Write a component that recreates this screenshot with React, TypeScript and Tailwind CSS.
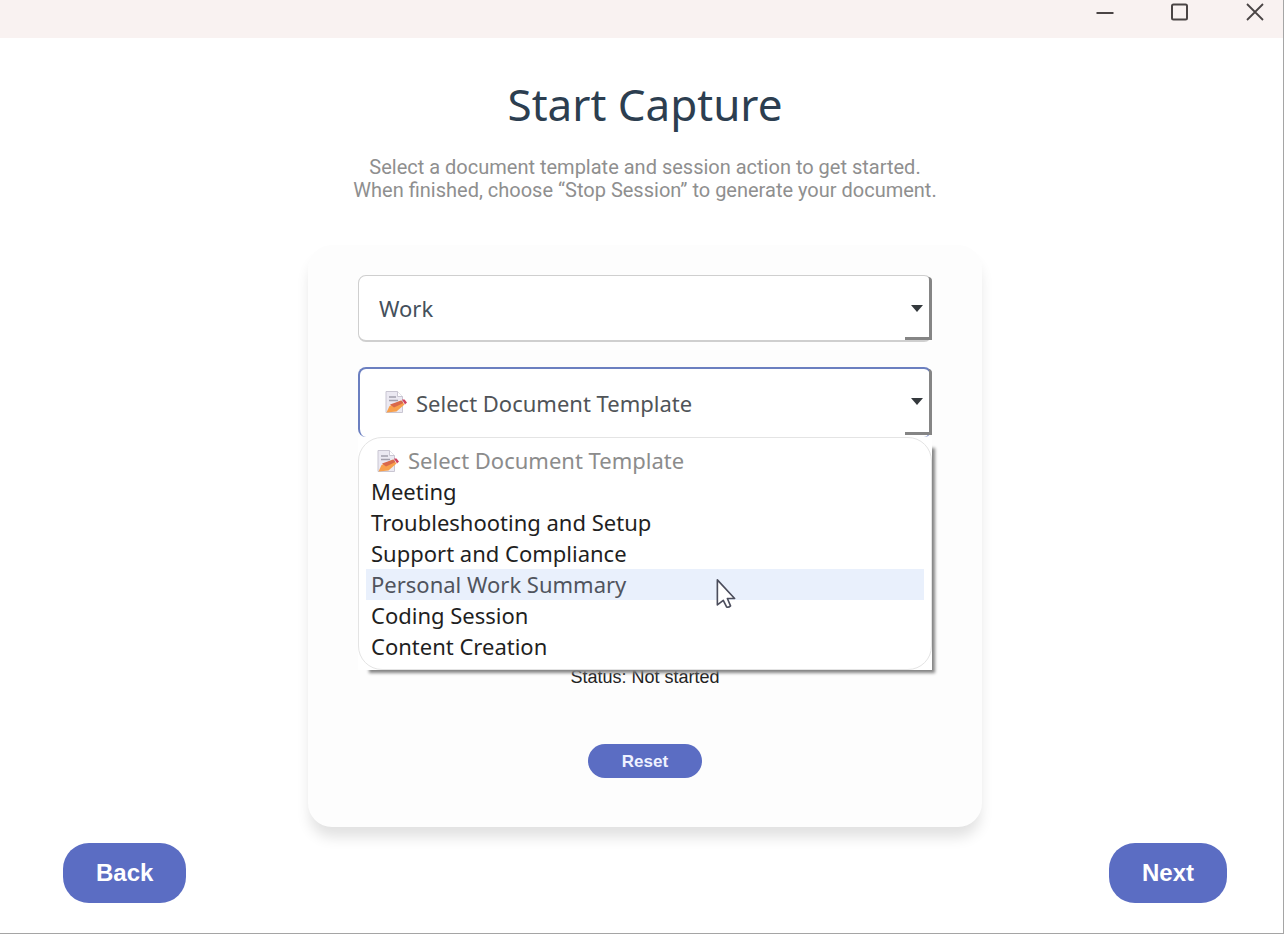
import { useState } from 'react';
import type { ReactNode } from 'react';

const templates = [
  'Meeting',
  'Troubleshooting and Setup',
  'Support and Compliance',
  'Personal Work Summary',
  'Coding Session',
  'Content Creation',
];

const TitleBar = () => (
  <header className="flex h-[38px] justify-end bg-[#f9f2f1] pr-[18px] text-[#4a4444]">
    <div className="flex h-6 items-center gap-[55px]">
      <button type="button" aria-label="Minimize">
        <svg width="20" height="20" viewBox="0 0 20 20" fill="none" stroke="currentColor" strokeWidth="2">
          <path d="M1.500 11H18.500" />
        </svg>
      </button>
      <button type="button" aria-label="Maximize">
        <svg width="20" height="20" viewBox="0 0 20 20" fill="none" stroke="currentColor" strokeWidth="2">
          <rect x="2" y="2.500" width="15" height="15" rx="1.500" />
        </svg>
      </button>
      <button type="button" aria-label="Close">
        <svg width="20" height="20" viewBox="0 0 20 20" fill="none" stroke="currentColor" strokeWidth="1.800">
          <path d="M2 2L18 18M18 2L2 18" />
        </svg>
      </button>
    </div>
  </header>
);

const MemoIcon = () => (
  <svg width="24" height="24" viewBox="0 0 24 24" fill="none" aria-hidden="true">
    <path d="M2 1.500H13.500L18.500 6.500V22.500H2Z" fill="#ebe9f2" stroke="#c9c6d2" />
    <path d="M13.500 1.500V6.500H18.500" fill="#fff" stroke="#c9c6d2" />
    <path d="M5 7H12M5 10.500H14" stroke="#a3a0ad" strokeWidth="1.300" />
    <path d="M2.500 22.500L5.500 16L17 10.500L20.500 14.500L12.500 21.500Z" fill="#f8a04c" />
    <path d="M6 14.500L17.500 10.500L19.500 13L10 17.500Z" fill="#d9694a" />
    <path d="M18 9.500L20.500 9.500L23 12.500L21 14.500Z" fill="#cf4060" />
  </svg>
);

const Cursor = () => (
  <svg
    className="pointer-events-none absolute left-[350px] top-[9px] z-10"
    width="20"
    height="32"
    viewBox="0 0 22 34"
    aria-hidden="true"
  >
    <path
      d="M1.500 1.500V29L8 24L11.500 31Q13.500 32.500 16 30L12.500 22H20.500Z"
      fill="#fff"
      stroke="#4b4d5c"
      strokeWidth="1.800"
      strokeLinejoin="round"
    />
  </svg>
);

const SelectFrame = ({ children }: { children: ReactNode }) => (
  <div className="relative">
    {children}
    <span className="pointer-events-none absolute bottom-0.5 right-0 top-0.5 w-[27px] rounded-tr-sm border-r-3 border-[#858585]" />
    <span className="pointer-events-none absolute bottom-0.5 right-0 h-[3px] w-[27px] bg-[#858585]" />
    <svg
      className="pointer-events-none absolute inset-y-0 right-2 my-auto"
      width="14"
      height="10"
      viewBox="0 0 14 10"
      aria-hidden="true"
    >
      <path d="M1 1H13L7 8Z" fill="#34393d" />
    </svg>
  </div>
);

const App = () => {
  const [category, setCategory] = useState('Work');
  const [template, setTemplate] = useState('');
  const [active, setActive] = useState('Personal Work Summary');

  return (
    <div className="flex min-h-screen flex-col border-b border-r border-[#a5a5a5] bg-white font-['Noto_Sans',sans-serif]">
      <TitleBar />

      <main className="flex flex-col items-center pl-[7px] pt-10">
        <h1 className="text-[44px] leading-[52px] text-[#2c3e50]">Start Capture</h1>
        <p className="mt-[26px] text-center font-[Roboto,sans-serif] text-xl leading-[23px] text-[#8f8f8f]">
          Select a document template and session action to get started.
          <br />
          When finished, choose “Stop Session” to generate your document.
        </p>

        {/* Session card */}
        <section className="mt-[43px] flex w-full max-w-[674px] flex-col items-center rounded-3xl bg-[#fdfdfd] px-[50px] pb-[49px] pt-[30px] shadow-[0_12px_14px_-2px_rgba(0,0,0,0.12)]">
          <div className="w-full">
            <SelectFrame>
              <select
                aria-label="Category"
                value={category}
                onChange={(e) => setCategory(e.target.value)}
                className="block h-[67px] w-full appearance-none rounded-lg border border-b-2 border-[#cfcfcf] bg-white px-5 text-[22px] text-[#44505c]"
              >
                <option>Work</option>
                <option>Personal</option>
              </select>
            </SelectFrame>
          </div>

          <div className="relative mt-[25px] w-full">
            <SelectFrame>
              <select
                aria-label="Document template"
                value={template}
                onChange={(e) => setTemplate(e.target.value)}
                className="block h-[70px] w-full appearance-none rounded-lg border-x-2 border-t-2 border-[#6b7fc0] bg-white pl-14 text-[22px] text-[#505458]"
              >
                <option value="">Select Document Template</option>
                {templates.map((name) => (
                  <option key={name}>{name}</option>
                ))}
              </select>
              <span className="pointer-events-none absolute inset-y-0 left-[26px] flex items-center">
                <MemoIcon />
              </span>
            </SelectFrame>

            {/* Open list */}
            <div className="absolute left-0 top-full w-full bg-white shadow-[7px_7px_3px_-4px_#858585]">
              <ul
                role="listbox"
                aria-label="Document templates"
                className="rounded-3xl border border-[#e4e4e4] px-[7px] py-[7px] text-[22px] leading-[31px] text-[#1f1f1f]"
              >
                <li
                  role="option"
                  aria-selected="false"
                  aria-disabled="true"
                  className="flex items-center gap-2 pl-2.5 text-[#8c8c8c]"
                >
                  <MemoIcon />
                  Select Document Template
                </li>
                {templates.map((name) => (
                  <li
                    key={name}
                    role="option"
                    aria-selected={name === active}
                    onMouseEnter={() => setActive(name)}
                    onClick={() => setTemplate(name)}
                    className={
                      name === active
                        ? 'relative bg-[#e9f0fc] px-[5px] text-[#50545e]'
                        : 'relative px-[5px]'
                    }
                  >
                    {name}
                    {name === active && <Cursor />}
                  </li>
                ))}
              </ul>
            </div>
          </div>

          <p className="mt-[227px] font-['Liberation_Sans',sans-serif] text-lg leading-[26px] text-[#222]">
            Status: Not started
          </p>
          <button
            type="button"
            className="mt-[54px] h-[34px] rounded-full bg-[#5b6dc3] px-[34px] pt-0.5 font-['Liberation_Sans',sans-serif] text-[17px] font-bold text-[#eef1ff]"
          >
            Reset
          </button>
        </section>
      </main>

      <footer className="flex justify-between pb-[30px] pl-[63px] pr-14 pt-4 font-['Liberation_Sans',sans-serif] text-2xl font-bold text-white">
        <button type="button" className="h-[60px] rounded-[26px] bg-[#5b6dc3] px-[33px]">
          Back
        </button>
        <button type="button" className="h-[60px] rounded-[26px] bg-[#5b6dc3] px-[33px]">
          Next
        </button>
      </footer>
    </div>
  );
};

export default App;
